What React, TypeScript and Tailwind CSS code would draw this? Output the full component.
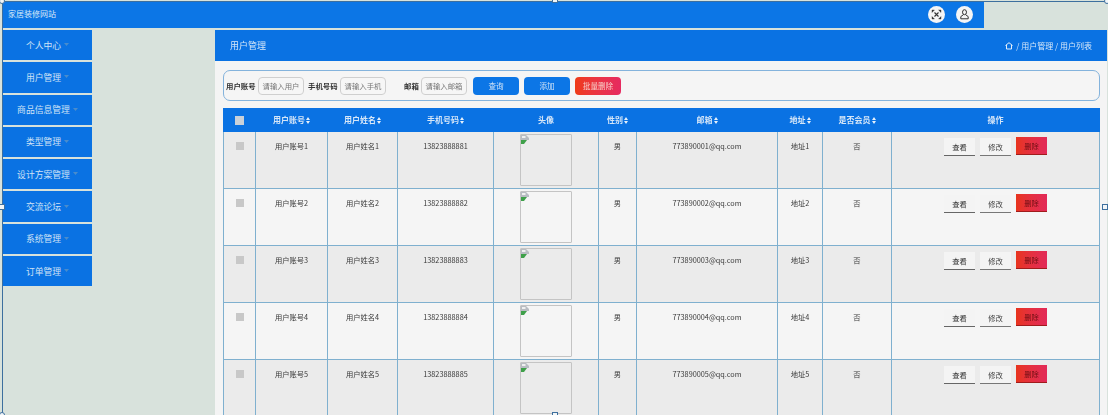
const navItems = ["个人中心", "用户管理", "商品信息管理", "类型管理", "设计方案管理", "交流论坛", "系统管理", "订单管理"];
const rows = [1, 2, 3, 4, 5];
const cols = [
  { label: "", w: "w-[32px]" },
  { label: "用户账号", w: "w-[72px]", sort: true },
  { label: "用户姓名", w: "w-[70px]", sort: true },
  { label: "手机号码", w: "w-[96px]", sort: true },
  { label: "头像", w: "w-[105px]" },
  { label: "性别", w: "w-[38px]", sort: true },
  { label: "邮箱", w: "w-[141px]", sort: true },
  { label: "地址", w: "w-[45px]", sort: true },
  { label: "是否会员", w: "w-[69px]", sort: true },
  { label: "操作", w: "" },
];

function SortIcon() {
  return (
    <svg width="4" height="7" viewBox="0 0 4 7" className="inline-block ml-[1px] align-[-0.5px]">
      <path d="M2 0 L4 3 H0 Z M0 4 H4 L2 7 Z" fill="#e6f0fb" />
    </svg>
  );
}

function Caret() {
  return (
    <svg width="5" height="3" viewBox="0 0 5 3" className="ml-[3px] mb-[1px]">
      <path d="M0 0 H5 L2.5 3 Z" fill="#4a8ccc" />
    </svg>
  );
}

function BrokenImage() {
  return (
    <svg width="8" height="9" viewBox="0 0 8 9" className="block">
      <path d="M0 0 H5 L8 3 V5 H0 Z" fill="#b8bcc2" />
      <path d="M0 5 H6 L3 9 H0 Z" fill="#3fa04a" />
      <path d="M1 1 H4.5 V3 H1 Z" fill="#f0f0f0" />
    </svg>
  );
}

function Handle({ className }: { className: string }) {
  return <div className={"absolute w-[6px] h-[6px] bg-[#f2f6f8] border border-[#3d6f9e] " + className} />;
}

function SearchField({ label, placeholder, labelClass }: { label: string; placeholder: string; labelClass: string }) {
  return (
    <div className="flex items-center">
      <span className={"text-[7.4px] font-bold text-[#333] whitespace-nowrap " + labelClass}>{label}</span>
      <span className="w-[46px] h-[18px] flex items-center justify-center rounded-[4px] border border-[#cfcfcf] bg-[#f6f6f6] text-[7.4px] text-[#777] overflow-hidden whitespace-nowrap">
        {placeholder}
      </span>
    </div>
  );
}

export default function App() {
  return (
    <div
      className="relative w-[1108px] h-[415px] overflow-hidden bg-[#d8e2dc] pt-[2px]"
      style={{ fontFamily: '"Noto Sans CJK SC", "Liberation Sans", sans-serif' }}
    >
      <div className="blur-[0.35px]">
        <header className="ml-[3px] w-[981px] h-[26px] bg-[#0c76e6] flex items-center justify-between pl-[5px] pr-[11px] pb-[2px]">
          <span className="text-[8px] text-[#dbe9f8]">家居装修网站</span>
          <div className="flex items-center gap-[11px]">
            <span className="w-[17px] h-[17px] rounded-full bg-[#f5f5f5] flex items-center justify-center">
              <svg width="11" height="11" viewBox="0 0 11 11" fill="none" stroke="#333" strokeWidth="1.1">
                <path d="M3.5 3.5 L7.5 7.5 M7.5 3.5 L3.5 7.5" />
                <path d="M1 1 H3.4 L1 3.4 Z M10 1 H7.6 L10 3.4 Z M1 10 H3.4 L1 7.6 Z M10 10 H7.6 L10 7.6 Z" fill="#333" strokeWidth="0.4" />
              </svg>
            </span>
            <span className="w-[17px] h-[17px] rounded-full bg-[#f5f5f5] flex items-center justify-center">
              <svg width="11" height="11" viewBox="0 0 11 11" fill="none" stroke="#333" strokeWidth="1">
                <ellipse cx="5.5" cy="3.2" rx="2" ry="2.5" />
                <path d="M4.5 5.6 L1.8 7.6 V9.8 H9.2 V7.6 L6.5 5.6" />
              </svg>
            </span>
          </div>
        </header>

        <div className="flex mt-[2px] items-start">
          <nav className="ml-[3px] w-[89px] flex flex-col gap-[2px] shrink-0">
            {navItems.map((n) => (
              <div key={n} className="h-[30.3px] bg-[#0a72e3] flex items-center justify-center text-[8.8px] text-[#cfe2f6]">
                {n}
                <Caret />
              </div>
            ))}
          </nav>

          <main className="ml-[123px] w-[892px] h-[385px] bg-[#f4f4f4] shrink-0">
            <div className="h-[31px] bg-[#0a72e3] flex items-center justify-between pl-[15px] pr-[15px] text-[#d5e6f8]">
              <span className="text-[9px]">用户管理</span>
              <span className="flex items-center text-[8px]">
                <svg width="8" height="8" viewBox="0 0 8 8" fill="none" stroke="#e4eef9" strokeWidth="1" className="mr-[3px]">
                  <path d="M0.5 3.5 L4 0.7 L7.5 3.5 M1.5 3 V7 H6.5 V3" />
                </svg>
                / 用户管理 / 用户列表
              </span>
            </div>

            <div className="mt-[9px] ml-[8px] w-[877px] h-[31px] rounded-[7px] border border-[#84b3dc] bg-[#f5f5f5] flex items-center pl-[2px] pt-[1px]">
              <SearchField label="用户账号" placeholder="请输入用户" labelClass="w-[32px]" />
              <SearchField label="手机号码" placeholder="请输入手机" labelClass="ml-[4px] w-[32px]" />
              <SearchField label="邮箱" placeholder="请输入邮箱" labelClass="ml-[18px] w-[17px]" />
              <button className="ml-[6px] w-[46px] h-[18px] rounded-[4px] bg-[#0c76e6] text-[7.6px] text-[#cfe2f6]">查询</button>
              <button className="ml-[5px] w-[46px] h-[18px] rounded-[4px] bg-[#0c76e6] text-[7.6px] text-[#cfe2f6]">添加</button>
              <button className="ml-[5px] w-[46px] h-[18px] rounded-[4px] bg-linear-to-r from-[#ef3b14] to-[#e62a60] text-[7.6px] text-[#f7cdc8]">批量删除</button>
            </div>

            <table className="mt-[7px] ml-[8px] w-[877px] table-fixed border-collapse">
              <thead>
                <tr className="h-[23px] bg-[#0a72e3]">
                  {cols.map((c, i) => (
                    <th key={i} className={"p-0 text-center align-middle text-[8px] font-bold text-[#d5e6f8] border border-[#0a72e3] " + c.w}>
                      {i === 0 ? (
                        <span className="inline-block w-[9px] h-[9px] bg-[#c9d1d9] align-middle" />
                      ) : (
                        <>
                          {c.label}
                          {c.sort && <SortIcon />}
                        </>
                      )}
                    </th>
                  ))}
                </tr>
              </thead>
              <tbody>
                {rows.map((r) => {
                  const td = "h-[57px] p-0 pt-[8px] align-top text-center text-[7.3px] leading-[12px] text-[#3a3a3a] border border-[#7fb0cf]";
                  return (
                    <tr key={r} className={r % 2 === 1 ? "bg-[#ebebeb]" : "bg-[#f5f5f5]"}>
                      <td className={td}>
                        <span className="inline-block w-[8px] h-[8px] bg-[#c8c8c8] mt-[2px] align-top" />
                      </td>
                      <td className={td}>用户账号{r}</td>
                      <td className={td}>用户姓名{r}</td>
                      <td className={td}>1382388888{r}</td>
                      <td className={td + " !pt-[2px]"}>
                        <div className="mx-auto w-[52px] h-[52px] border border-[#c4c4c4] rounded-[1px]">
                          <BrokenImage />
                        </div>
                      </td>
                      <td className={td}>男</td>
                      <td className={td}>77389000{r}@qq.com</td>
                      <td className={td}>地址{r}</td>
                      <td className={td}>否</td>
                      <td className={td + " !pt-[6px]"}>
                        <div className="flex justify-center gap-[5px]">
                          <span className="w-[31px] h-[18px] flex items-center justify-center border-b border-[#666] bg-[#f4f4f4] text-[#333]">查看</span>
                          <span className="w-[31px] h-[18px] flex items-center justify-center border-b border-[#777] bg-[#f4f4f4] text-[#444]">修改</span>
                          <span className="w-[31px] h-[18px] -mt-[1px] flex items-center justify-center border-b border-[#a01c1c] bg-linear-to-r from-[#e8341c] to-[#e22a58] text-[#6e0f14]">删除</span>
                        </div>
                      </td>
                    </tr>
                  );
                })}
              </tbody>
            </table>
          </main>
        </div>
      </div>

      <div className="absolute left-[2px] top-[1px] right-0 bottom-0 border-l border-t border-[#3d6f9e]" />
      <Handle className="-left-[1px] -top-[2px] rounded-full" />
      <Handle className="left-[552px] -top-[3px]" />
      <Handle className="-right-[2px] -top-[2px] rounded-full" />
      <Handle className="-left-[1px] top-[204px]" />
      <Handle className="right-0 top-[204px]" />
      <Handle className="left-[552px] -bottom-[3px]" />
      <Handle className="-left-[1px] -bottom-[3px] rounded-full" />
    </div>
  );
}
